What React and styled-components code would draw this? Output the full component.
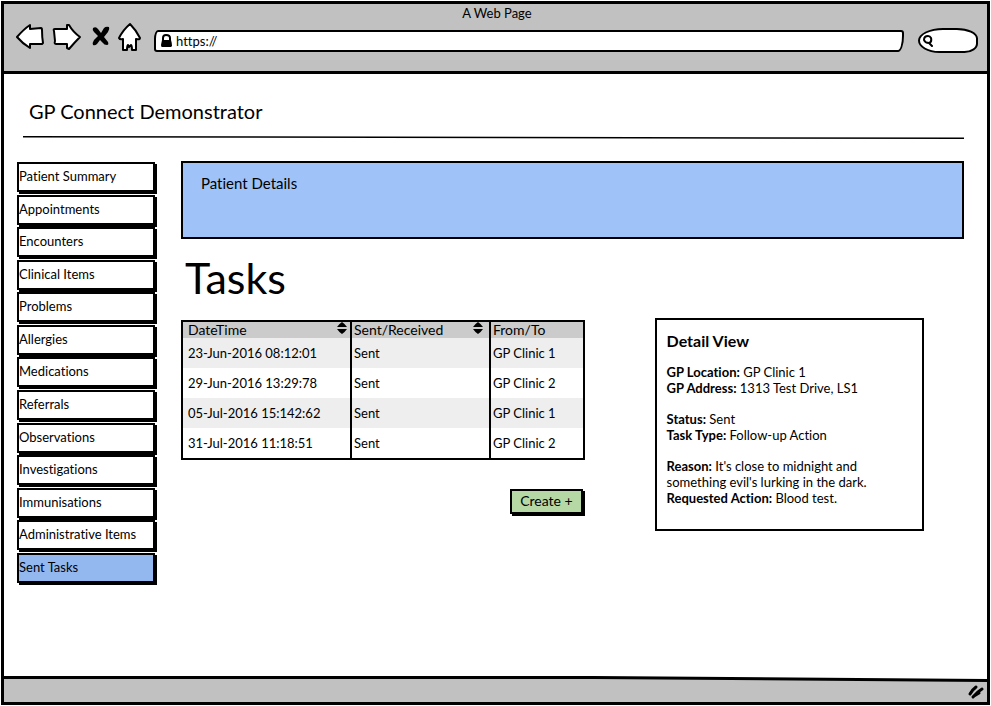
import React, { useState } from "react";
import styled, { createGlobalStyle } from "styled-components";

const GlobalStyle = createGlobalStyle`
  *, *::before, *::after { box-sizing: border-box; }
  body {
    margin: 0;
    background: #fff;
    color: #000;
    font-family: Lato, "Open Sans", sans-serif;
    font-size: 14px;
    line-height: 16px;
    font-variant-ligatures: none;
  }
  button, input { font: inherit; color: inherit; }
  h1, h2, p, ul { margin: 0; padding: 0; }
`;

const Frame = styled.div`
  display: flex;
  flex-direction: column;
  min-height: calc(100vh - 2px);
  margin: 1px;
  border: 3px solid #000;
`;

const Chrome = styled.header`
  background: #c1c1c1;
  border-bottom: 3px solid #000;
  padding: 1px 9px 18px 12px;
`;

const WindowTitle = styled.div`
  text-align: center;
  font-size: 13px;
`;

const Toolbar = styled.div`
  display: flex;
  align-items: center;
  height: 32px;
`;

const NavButtons = styled.div`
  display: flex;
  align-items: center;
  gap: 8px;
  margin-right: 12px;
`;

const IconButton = styled.button`
  display: flex;
  padding: 0;
  border: 0;
  background: none;
`;

const SketchSvg = styled.svg`
  display: block;
  fill: #fff;
  stroke: #000;
  stroke-width: 2;
  stroke-linejoin: round;
  stroke-linecap: round;
`;

const AddressBar = styled.label`
  flex: 1;
  display: flex;
  align-items: center;
  gap: 4px;
  height: 22px;
  margin-top: 7px;
  padding-left: 5px;
  border: 2px solid #000;
  border-radius: 4px 3px 6px 3px / 9px 3px 16px 3px;
  background: #fff;
`;

const BareInput = styled.input`
  flex: 1;
  min-width: 0;
  padding: 0;
  border: 0;
  outline: 0;
  background: none;
  font-size: 13px;
`;

const SearchBox = styled.label`
  display: flex;
  align-items: center;
  width: 60px;
  height: 25px;
  margin: 6px 0 0 14px;
  padding-left: 2px;
  border: 2px solid #000;
  border-radius: 26px 22px 14px 22px / 13px 11px 10px 13px;
  background: #fff;
`;

const Page = styled.div`
  flex: 1;
  padding: 25px 23px 60px 13px;
`;

const SiteHeader = styled.div`
  padding: 0 0 13px 12px;
  font-size: 20px;
  line-height: 24px;
`;

const Rule = styled.div`
  height: 3px;
  margin-left: 6px;
  background: #000;
  clip-path: polygon(0 0, 100% 50%, 100% 100%, 0 50%);
`;

const Columns = styled.div`
  display: flex;
  align-items: flex-start;
  gap: 26px;
  margin-top: 22px;
`;

const SideNav = styled.ul`
  flex: none;
  display: flex;
  flex-direction: column;
  justify-content: space-between;
  width: 138px;
  min-height: 421px;
  margin-top: 1px;
  list-style: none;
`;

const NavItem = styled.button`
  display: block;
  width: 100%;
  height: 30px;
  padding: 0 0 2px;
  border: 2px solid #000;
  background: ${(p) => (p.$active ? "#93b8f0" : "#fff")};
  box-shadow: 2px 2px 0 #000;
  font-size: 13px;
  text-align: left;
  white-space: nowrap;
`;

const Main = styled.main`
  flex: 1;
  min-width: 0;
`;

const Banner = styled.section`
  min-height: 78px;
  padding: 12px 18px;
  border: 2px solid #000;
  background: #9fc3f8;
  font-size: 15px;
`;

const PageTitle = styled.h1`
  padding: 14px 4px 0;
  font-size: 43px;
  line-height: 50px;
  font-weight: 400;
`;

const Split = styled.div`
  display: grid;
  grid-template-columns: minmax(0, 403fr) minmax(0, 269fr);
  gap: 70px;
  align-items: start;
  margin: 15px 40px 0 0;
`;

const TaskPane = styled.div`
  display: flex;
  flex-direction: column;
  align-items: flex-end;
  gap: 29px;
  padding-top: 2px;
`;

const TaskTable = styled.table`
  width: 100%;
  table-layout: fixed;
  border: 2px solid #000;
  border-collapse: separate;
  border-spacing: 0;
`;

const Col = styled.col`
  width: ${(p) => p.$width};
`;

const HeadCell = styled.th`
  height: 16px;
  padding: 0 ${(p) => (p.$first ? 3 : 6)}px 0 ${(p) => (p.$first ? 5 : 2)}px;
  border-left: ${(p) => (p.$first ? 0 : 2)}px solid #000;
  background: #cbcbcb;
  font-size: 14px;
  font-weight: 400;
  text-align: left;
`;

const HeadContent = styled.div`
  display: flex;
  justify-content: space-between;
  align-items: flex-start;
`;

const BodyRow = styled.tr`
  background: #fff;
  &:nth-child(odd) { background: #eee; }
`;

const Cell = styled.td`
  height: 30px;
  padding: 0 2px 0 ${(p) => (p.$first ? 5 : 2)}px;
  border-left: ${(p) => (p.$first ? 0 : 2)}px solid #000;
  white-space: nowrap;
  font-size: 13px;
`;

const CreateButton = styled.button`
  height: 25px;
  margin-right: 2px;
  padding: 0 8px 2px;
  border: 2px solid #000;
  background: #b6d8a4;
  box-shadow: 2px 2px 0 #000;
`;

const DetailPanel = styled.section`
  display: flex;
  flex-direction: column;
  gap: 15px;
  min-height: 213px;
  padding: 13px 10px;
  border: 2px solid #000;
`;

const DetailTitle = styled.h2`
  font-size: 16px;
  line-height: 16px;
  font-weight: 700;
`;

const Fact = styled.p`
  font-size: 13px;
`;

const StatusBar = styled.footer`
  height: 26px;
  background: #000;
  clip-path: polygon(0 0, 60% 0, 100% 3px, 100% 100%, 0 100%);
`;

const StatusFill = styled.div`
  display: flex;
  justify-content: flex-end;
  align-items: center;
  height: 26px;
  padding: 2px 1px 0 0;
  background: #c1c1c1;
  border-top: 3px solid #000;
  clip-path: polygon(0 3px, 60% 3px, 100% 6px, 100% 100%, 0 100%);
`;

const LINKS = [
  "Patient Summary", "Appointments", "Encounters", "Clinical Items", "Problems",
  "Allergies", "Medications", "Referrals", "Observations", "Investigations",
  "Immunisations", "Administrative Items", "Sent Tasks",
];

const TASKS = [
  ["23-Jun-2016 08:12:01", "Sent", "GP Clinic 1"],
  ["29-Jun-2016 13:29:78", "Sent", "GP Clinic 2"],
  ["05-Jul-2016 15:142:62", "Sent", "GP Clinic 1"],
  ["31-Jul-2016 11:18:51", "Sent", "GP Clinic 2"],
];

const FACTS = [
  [["GP Location", "GP Clinic 1"], ["GP Address", "1313 Test Drive, LS1"]],
  [["Status", "Sent"], ["Task Type", "Follow-up Action"]],
  [
    ["Reason", "It's close to midnight and something evil's lurking in the dark."],
    ["Requested Action", "Blood test."],
  ],
];

const BackIcon = () => (
  <SketchSvg width="28" height="28" viewBox="0 0 28 28">
    <path d="M1 14 Q8 6 14 2 L14 6 L25 5 Q26 5 26 7 Q26 14 27 20 L26 21 L14 21 L14 25 Q6 20 1 14Z" />
  </SketchSvg>
);
const ForwardIcon = () => (
  <SketchSvg width="30" height="28" viewBox="0 0 30 28">
    <path d="M2 8 Q1 6 3 6 L15 6 L15 2 L17 2 Q21 9 28 14 Q23 19 17 26 L15 25 L15 21 L4 21 Q2 21 3 18 Z" />
  </SketchSvg>
);
const StopIcon = () => (
  <svg width="20" height="28" viewBox="0 0 20 28">
    <path d="M3 5 Q6 3 8 6 L11 10 L14 5 Q16 3 19 4 Q20 6 18 9 L14 14 L18 19 Q19 22 17 22 Q14 22 13 20 L10 17 L7 21 Q5 23 3 22 Q2 20 4 17 L8 13 L4 9 Q2 7 3 5Z" />
  </svg>
);
const HomeIcon = () => (
  <SketchSvg width="24" height="30" viewBox="0 0 24 30">
    <path d="M12 2 Q5 8 1 16 Q2 18 5 17 L5 28 L9 28 Q9 24 10 23 L11 25 L13 23 Q14 24 14 28 L18 28 L18 17 Q22 18 22 16 Q18 8 12 2Z" />
  </SketchSvg>
);
const LockIcon = () => (
  <svg width="11" height="13" viewBox="0 0 11 13">
    <path d="M2 7 V4 Q2 1 5 1 Q9 1 9 4 V7" fill="none" stroke="#000" strokeWidth="2" />
    <path d="M1 6 H10 Q11 9 11 12 L10 13 H1 Q0 13 0 11 Z" />
  </svg>
);
const SearchIcon = () => (
  <svg width="13" height="13" viewBox="0 0 13 13" fill="none" stroke="#000" strokeWidth="2" strokeLinecap="round">
    <path d="M6 2 Q2 2 2 6 Q3 9 7 9 Q10 8 9 4 Q8 2 6 2 M7 9 L10 12" />
  </svg>
);
const SortIcon = () => (
  <svg width="10" height="13" viewBox="0 0 10 13">
    <path d="M5 0 Q8 2 10 5 H0 Q2 2 5 0 M0 7 H10 Q8 10 5 12 Q2 10 0 7" />
  </svg>
);
const ResizeIcon = () => (
  <svg width="19" height="16" viewBox="0 0 19 16" stroke="#000" strokeWidth="3" strokeLinecap="round" fill="none">
    <path d="M3 10 Q5 6 9 3" />
    <path d="M6 13 Q10 8 15 5 M7 12 L12 9" />
  </svg>
);

export default function App() {
  const [active, setActive] = useState("Sent Tasks");
  return (
    <>
      <GlobalStyle />
      <Frame>
        <Chrome>
          <WindowTitle>A Web Page</WindowTitle>
          <Toolbar>
            <NavButtons>
              <IconButton aria-label="Back"><BackIcon /></IconButton>
              <IconButton aria-label="Forward"><ForwardIcon /></IconButton>
              <IconButton aria-label="Stop"><StopIcon /></IconButton>
              <IconButton aria-label="Home"><HomeIcon /></IconButton>
            </NavButtons>
            <AddressBar>
              <LockIcon />
              <BareInput aria-label="Address" defaultValue="https://" />
            </AddressBar>
            <SearchBox>
              <SearchIcon />
              <BareInput aria-label="Search" />
            </SearchBox>
          </Toolbar>
        </Chrome>
        <Page>
          <SiteHeader>GP Connect Demonstrator</SiteHeader>
          <Rule />
          <Columns>
            <SideNav>
              {LINKS.map((name) => (
                <li key={name}>
                  <NavItem $active={name === active} onClick={() => setActive(name)}>{name}</NavItem>
                </li>
              ))}
            </SideNav>
            <Main>
              <Banner>Patient Details</Banner>
              <PageTitle>Tasks</PageTitle>
              <Split>
                <TaskPane>
                  <TaskTable>
                    <colgroup>
                      <Col $width="167px" />
                      <Col $width="139px" />
                      <Col $width="auto" />
                    </colgroup>
                    <thead>
                      <tr>
                        <HeadCell $first>
                          <HeadContent>DateTime<IconButton aria-label="Sort by date"><SortIcon /></IconButton></HeadContent>
                        </HeadCell>
                        <HeadCell>
                          <HeadContent>Sent/Received<IconButton aria-label="Sort by direction"><SortIcon /></IconButton></HeadContent>
                        </HeadCell>
                        <HeadCell>From/To</HeadCell>
                      </tr>
                    </thead>
                    <tbody>
                      {TASKS.map((row) => (
                        <BodyRow key={row[0]}>
                          {row.map((text, i) => <Cell key={i} $first={i === 0}>{text}</Cell>)}
                        </BodyRow>
                      ))}
                    </tbody>
                  </TaskTable>
                  <CreateButton>Create +</CreateButton>
                </TaskPane>
                <DetailPanel>
                  <DetailTitle>Detail View</DetailTitle>
                  {FACTS.map((group) => (
                    <div key={group[0][0]}>
                      {group.map(([label, value]) => (
                        <Fact key={label}><b>{label}:</b> {value}</Fact>
                      ))}
                    </div>
                  ))}
                </DetailPanel>
              </Split>
            </Main>
          </Columns>
        </Page>
        <StatusBar><StatusFill><ResizeIcon /></StatusFill></StatusBar>
      </Frame>
    </>
  );
}
